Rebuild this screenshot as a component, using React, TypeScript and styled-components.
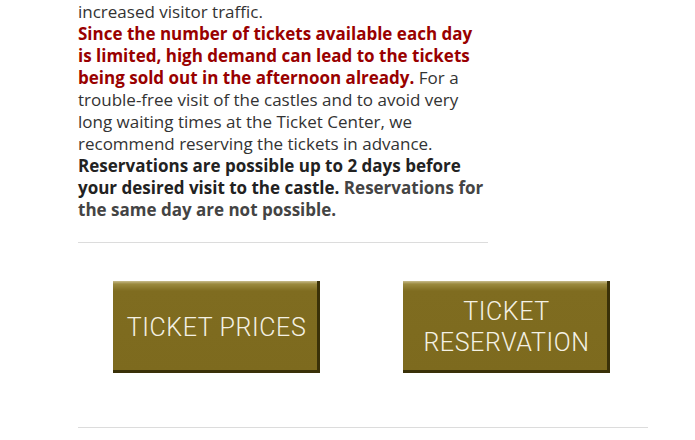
import React from "react";
import styled, { createGlobalStyle } from "styled-components";

const Global = createGlobalStyle`
  html, body { margin: 0; padding: 0; background: #fff; }
  body { font-family: "Open Sans", "DejaVu Sans", sans-serif; }
`;

const Page = styled.div`
  width: 695px;
  height: 440px;
  overflow: hidden;
  padding-left: 78px;
  box-sizing: border-box;
`;

const Column = styled.div`
  width: 570px;
`;

const Text = styled.p`
  width: 410px;
  margin: 1px 0 0;
  font-size: 17px;
  line-height: 22px;
  color: #333;
`;

const Red = styled.strong`
  color: #990000;
  font-weight: 700;
`;

const Dark = styled.strong<{ $tone?: "dark" | "gray" }>`
  color: ${(p) => (p.$tone === "gray" ? "#444" : "#222")};
  font-weight: 700;
`;

const Spacer = styled.div`
  height: 21px;
`;

const Rule = styled.hr<{ $w: number }>`
  width: ${(p) => p.$w}px;
  margin: 0;
  border: 0;
  border-top: 1px solid #dcdcdc;
`;

const Buttons = styled.div`
  display: grid;
  grid-template-columns: 285px 285px;
  padding: 38px 0 54px;
`;

const Cell = styled.div<{ $left?: number; $right?: number }>`
  display: flex;
  justify-content: center;
  padding-left: ${(p) => p.$left ?? 0}px;
  padding-right: ${(p) => p.$right ?? 0}px;
`;

const TicketButton = styled.a`
  width: 207px;
  height: 92px;
  box-sizing: border-box;
  display: flex;
  flex-direction: column;
  align-items: center;
  justify-content: center;
  background: linear-gradient(180deg, #c8bc8c 0px, #9b8a3f 3px, #7f6c20 10px, #7d6a1e 100%);
  box-shadow: inset -3px -3px 0 #3a3108, inset -1px -1px 0 #2a2305;
  color: #f4f1e4;
  font-family: Roboto, "DejaVu Sans Condensed", sans-serif;
  font-weight: 300;
  font-size: 25px;
  line-height: 31px;
  letter-spacing: 0.6px;
  text-decoration: none;
  text-align: center;
`;

export default function App() {
  return (
    <>
      <Global />
      <Page>
        <Column>
          <Text>
            increased visitor traffic.
            <br />
            <Red>
              Since the number of tickets available each day is limited, high
              demand can lead to the tickets being sold out in the afternoon
              already.
            </Red>{" "}
            For a trouble-free visit of the castles and to avoid very long
            waiting times at the Ticket Center, we recommend reserving the
            tickets in advance.
            <br />
            <Dark>
              Reservations are possible up to 2 days before your desired visit
              to the castle.
            </Dark>{" "}
            <Dark $tone="gray">Reservations for the same day are not possible.</Dark>
          </Text>
          <Spacer />
          <Rule $w={410} />
          <Buttons>
            <Cell $right={8}>
              <TicketButton href="#">TICKET PRICES</TicketButton>
            </Cell>
            <Cell $left={2}>
              <TicketButton href="#">
                <span>TICKET</span>
                <span>RESERVATION</span>
              </TicketButton>
            </Cell>
          </Buttons>
          <Rule $w={570} />
        </Column>
      </Page>
    </>
  );
}
